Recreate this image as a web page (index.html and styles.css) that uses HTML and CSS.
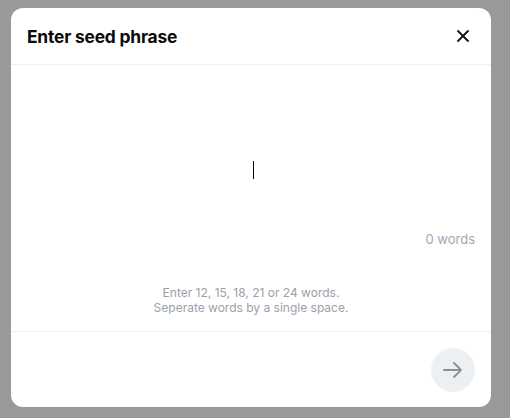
FILE: index.html
```html
<!DOCTYPE html>
<html lang="en">
<head>
<meta charset="utf-8">
<title>Enter seed phrase</title>
<link rel="stylesheet" href="styles.css">
</head>
<body>
<div class="modal">
  <div class="modal-header">
    <h1 class="title">Enter seed phrase</h1>
    <button class="close-btn" aria-label="Close">
      <svg width="12" height="12" viewBox="0 0 12 12"><path d="M1 1 L11 11 M11 1 L1 11" stroke="#111" stroke-width="1.8" stroke-linecap="round"/></svg>
    </button>
  </div>
  <div class="modal-body">
    <div class="input-wrap">
      <textarea class="seed-input" spellcheck="false"></textarea>
      <span class="caret"></span>
    </div>
    <div class="counter">0 words</div>
    <p class="hint">Enter 12, 15, 18, 21 or 24 words.<br>Seperate words by a single space.</p>
  </div>
  <div class="modal-footer">
    <button class="next-btn" aria-label="Next">
      <svg width="22" height="22" viewBox="0 0 22 22"><path d="M2 11 H19 M12 4 L19 11 L12 18" fill="none" stroke="#8a9099" stroke-width="1.8" stroke-linecap="round" stroke-linejoin="round"/></svg>
    </button>
  </div>
</div>
</body>
</html>
```
FILE: styles.css
```css
* { box-sizing: border-box; }
html, body { margin: 0; padding: 0; }
body {
  background: #999999;
  width: 510px;
  height: 418px;
  overflow: hidden;
  font-family: Inter, "Noto Sans", sans-serif;
}
.modal {
  width: 480px;
  height: 399px;
  margin: 8px 0 0 11px;
  background: #ffffff;
  border-radius: 12px;
  display: flex;
  flex-direction: column;
}
.modal-header {
  height: 57px;
  flex: none;
  padding: 0 16px;
  display: flex;
  align-items: center;
  justify-content: space-between;
  border-bottom: 1px solid #eef0f3;
}
.title {
  margin: 0;
  font-size: 17.4px;
  font-weight: 700;
  color: #0b0b0c;
  letter-spacing: -0.2px;
}
.close-btn {
  width: 24px;
  height: 24px;
  border: 0;
  background: none;
  padding: 0;
  display: flex;
  align-items: center;
  justify-content: center;
}
.modal-body {
  flex: 1;
  padding: 16px 16px 16px;
  display: flex;
  flex-direction: column;
}
.input-wrap {
  position: relative;
  height: 146px;
}
.seed-input {
  width: 100%;
  height: 100%;
  border: 0;
  outline: none;
  resize: none;
  text-align: center;
  font-family: inherit;
  font-size: 16px;
  background: transparent;
  caret-color: transparent;
}
.caret {
  position: absolute;
  left: 226px;
  top: 80px;
  width: 1px;
  height: 18px;
  background: #000;
}
.counter {
  text-align: right;
  font-size: 13px;
  line-height: 20px;
  color: #a0a8b5;
  margin-top: 2px;
}
.hint {
  margin: 36px 0 0;
  text-align: center;
  font-size: 12px;
  line-height: 15px;
  color: #9aa1ab;
}
.modal-footer {
  flex: none;
  border-top: 1px solid #eef0f3;
  padding: 16px 16px 15px;
  display: flex;
  justify-content: flex-end;
}
.next-btn {
  width: 44px;
  height: 44px;
  border-radius: 50%;
  border: 0;
  background: #edf0f3;
  padding: 0;
  display: flex;
  align-items: center;
  justify-content: center;
}
```
